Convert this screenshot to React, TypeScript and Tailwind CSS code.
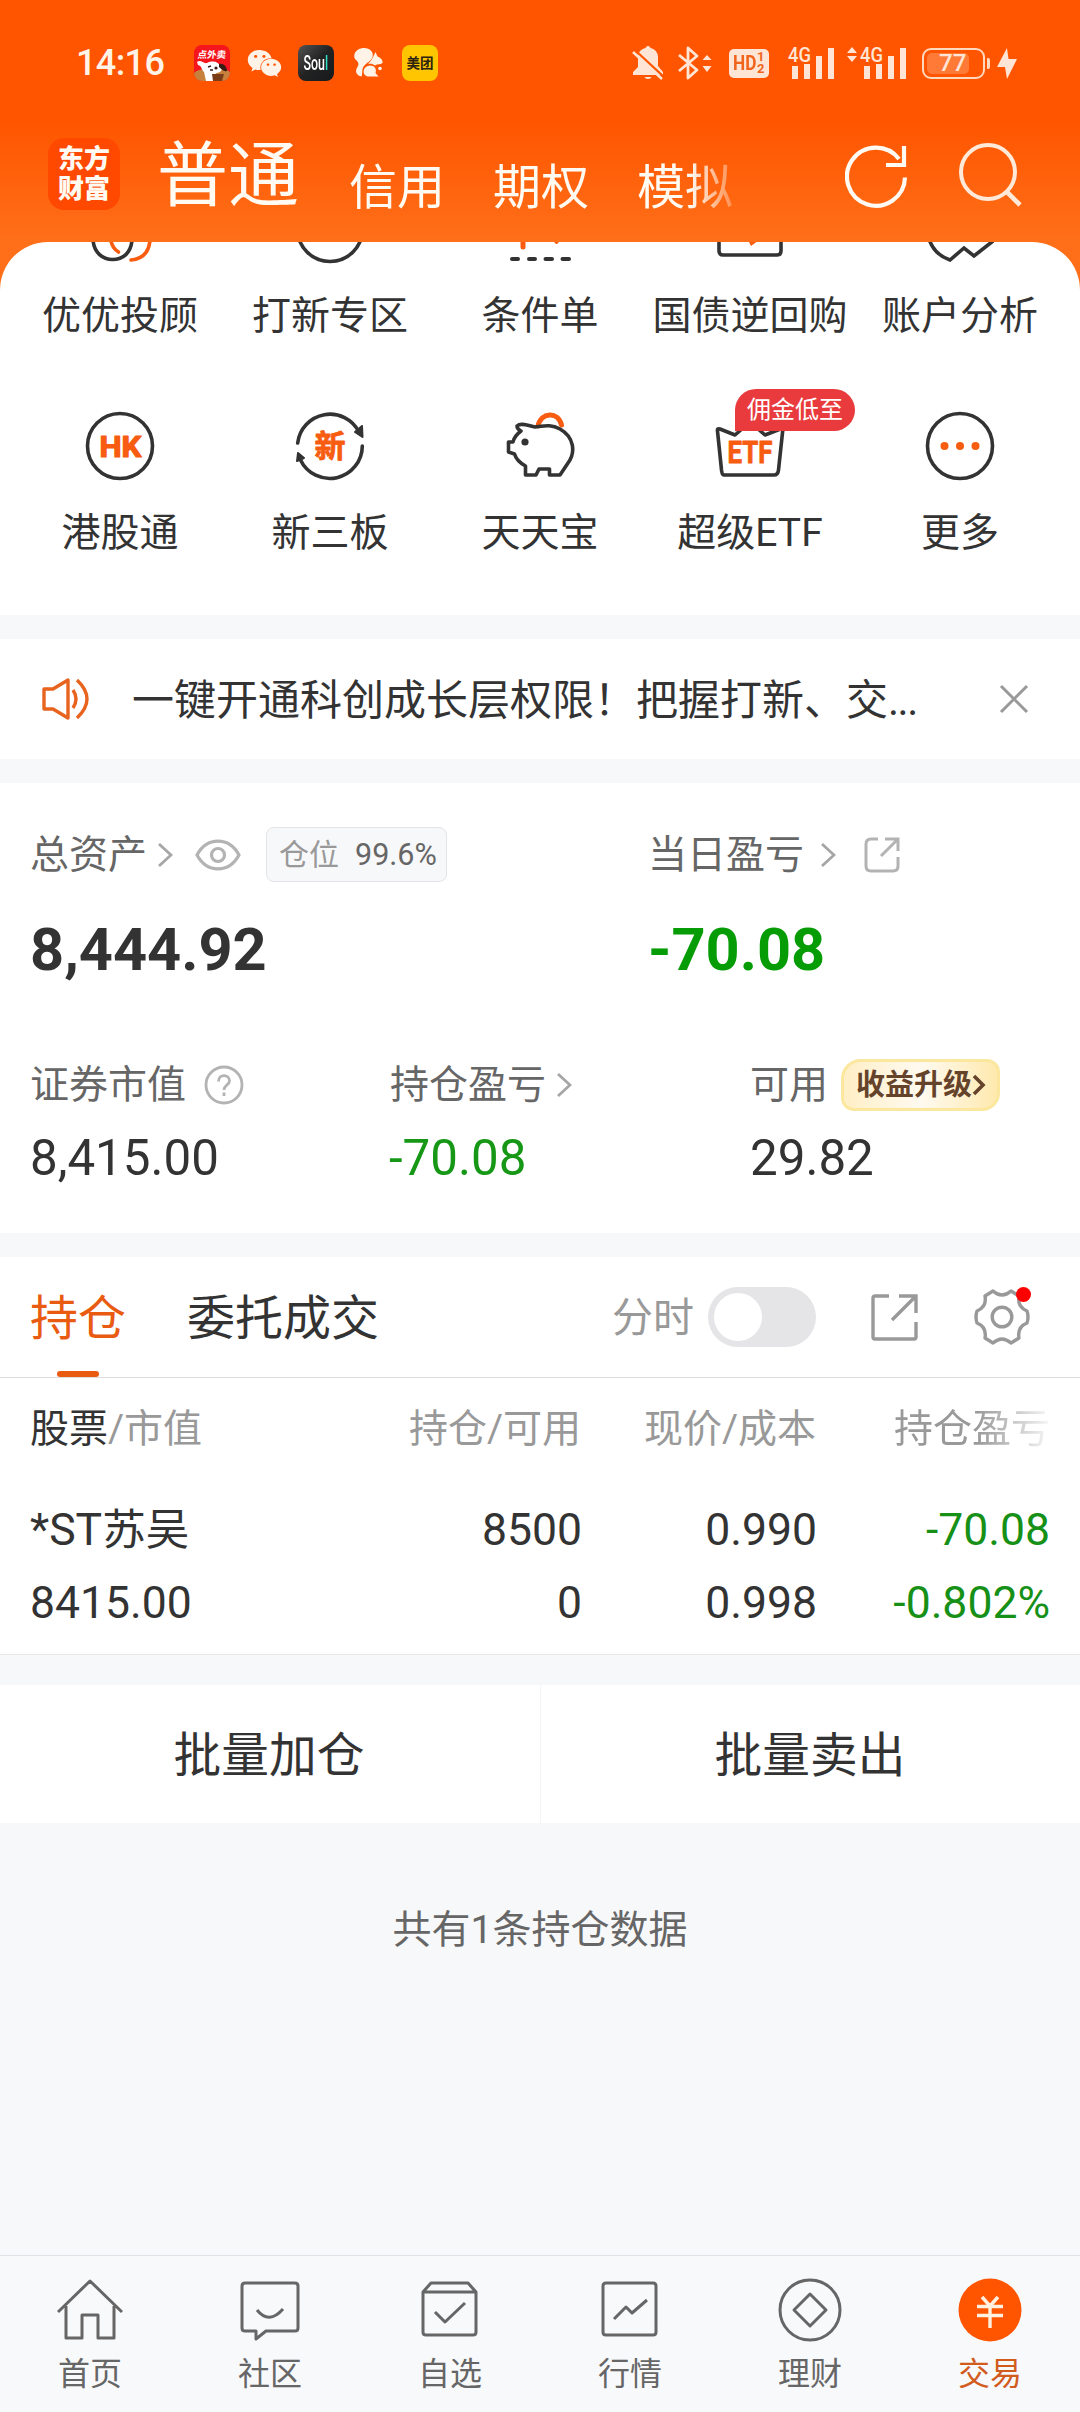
import React from "react";
import { FaWeixin } from "react-icons/fa";

const INK = "#333333";
const ORANGE = "#f75c10";

function StatusBar() {
  return (
    <div className="flex h-[126px] items-center pl-[76px] text-[#fff3e8]">
      <span className="w-[118px] text-[36px] leading-[40px] font-medium tracking-[-0.600px]">14:16</span>
      <svg width="36" height="36" viewBox="0 0 36 36">
        <defs>
          <clipPath id="dog"><rect width="36" height="36" rx="8" /></clipPath>
        </defs>
        <g clipPath="url(#dog)">
          <rect width="36" height="36" fill="#f5151c" />
          <path d="M0 28C6 22 30 22 36 27V36H0Z" fill="#c8813c" />
          <path d="M3 17C7 14 9 19 13 18C19 15 25 17 27 22C30 25 25 29 20 28L10 27C7 24 8 21 4 20Z" fill="#fff" />
          <path d="M25 19C29 18 33 21 33 26C29 27 28 24 25 22Z" fill="#3a1c14" />
          <path d="M10 27H22L21 36H12Z" fill="#fff" />
          <path d="M18 29H30L28 36H19Z" fill="#7a3d18" />
          <path d="M14 22L17 21M16 25L19 25" stroke="#3a1c14" strokeWidth="1.4" />
          <circle cx="22" cy="23" r="1.6" fill="#3a1c14" />
        </g>
        <text x="18" y="13.500" textAnchor="middle" fontSize="9.500" fontWeight="700" fill="#fff" transform="skewX(-6) translate(1 0)">点外卖</text>
      </svg>
      <FaWeixin className="ml-[17px] text-[35px]" />
      <div className="ml-[16px] flex h-[36px] w-[36px] items-center justify-center rounded-[8px] bg-linear-to-br from-[#555] via-[#222] to-[#161a1c] text-[20px] font-medium text-white">
        <span className="-mx-2 inline-block scale-x-[0.62] whitespace-nowrap">Sou<span className="text-[#30dfc5]">l</span></span>
      </div>
      <svg className="ml-[20px]" width="29" height="30" viewBox="0 0 29 30" fill="currentColor">
        <path d="M10 0C16 0 20 4 18.500 9C17 14 10 15.500 8.500 21C8 24 8.500 26 7.500 28.500C2.500 28 0.500 23 3.500 19C5.500 16 4 13.500 1.500 11.500C0 10 0 8 0.500 6C2 2 6 0 10 0Z" />
        <path d="M14 16C17 13.500 19 9.500 21.500 4L23.500 8.500C27 10 29 12 28.500 15C26 17 23.500 15.500 21 17.500C19 16 17 15.500 14 16Z" />
        <path d="M16 17.500C20.500 17.500 23 21 21.500 25L24.500 28.500H13.500C7.500 27 8.500 18 16 17.500Z" />
        <circle cx="26" cy="20.500" r="1.800" />
      </svg>
      <div className="ml-[19px] flex h-[36px] w-[36px] items-center justify-center rounded-[8px] bg-[#ffc500] text-[13.500px] font-bold text-[#2b2210]">美团</div>

      <div className="ml-auto flex items-center pr-[63px] text-[#ffe5d5]">
        <svg width="32" height="34" viewBox="0 0 32 34" fill="currentColor">
          <path d="M16 0C17.500 0 18 1 18.500 2C23 3 26 6.500 26 11V20L31 26V29H1V26L6 21V11C6 6.500 9 3 13.500 2C14 1 14.500 0 16 0Z" />
          <path d="M12.500 31H19.500C19 33.500 13 33.500 12.500 31Z" />
          <path d="M1 6L30 33" stroke="currentColor" strokeWidth="2.600" />
          <path d="M4 5L32 31" stroke="#ff5500" strokeWidth="2.200" />
        </svg>
        <svg className="ml-[14px]" width="35" height="34" viewBox="0 0 35 34" fill="none" stroke="currentColor" strokeWidth="2.800" strokeLinejoin="round">
          <path d="M1 9L19 24L10 32V2L19 10L1 25" />
          <path d="M29 9L33.500 14H24.500ZM29 26L33.500 20H24.500Z" fill="currentColor" stroke="none" />
        </svg>
        <div className="ml-[16px] flex h-[29px] w-[40px] items-center rounded-[5px] bg-[#ffe5d5] pl-[4px] text-[#f0641c]">
          <span className="inline-block w-[24px] origin-left scale-x-[0.86] text-[20px] leading-[29px] font-bold">HD</span>
          <span className="text-[13px] leading-[12px] font-bold">1<br />2</span>
        </div>
        <svg className="ml-[19px] overflow-visible" width="47" height="34" viewBox="0 0 47 34" fill="currentColor">
          <text x="0" y="16" fontSize="21" fontWeight="500" textLength="23" lengthAdjust="spacingAndGlyphs">4G</text>
          <path d="M4 20h6v13h-6zM16 18h6v15h-6zM28 10h6v23h-6zM40 2h6v31h-6z" />
        </svg>
        <svg className="ml-[12px] overflow-visible" width="60" height="34" viewBox="0 0 60 34" fill="currentColor">
          <path d="M5 1L10 7H0ZM5 16L10 10H0Z" />
          <text x="13" y="16" fontSize="21" fontWeight="500" textLength="23" lengthAdjust="spacingAndGlyphs">4G</text>
          <path d="M17 20h6v13h-6zM29 18h6v15h-6zM41 10h6v23h-6zM53 2h6v31h-6z" />
        </svg>
        <div className="ml-[15px] flex h-[31px] w-[63px] items-center rounded-[9px] border-[2.500px] border-[#ffd9bd] p-[3px]">
          <div className="flex h-full w-[42px] items-center rounded-[5px] bg-[#ff7a36] pl-[12px] text-[24px] font-medium">77</div>
        </div>
        <div className="ml-[2px] h-[11px] w-[3px] rounded-r-[2px] bg-[#ffd9bd]" />
        <svg className="ml-[7px]" width="20" height="31" viewBox="0 0 20 31" fill="currentColor">
          <path d="M10 0L0 19H8L10 31L20 11H11.500Z" />
        </svg>
      </div>
    </div>
  );
}

function Header() {
  return (
    <div className="flex h-[116px] text-[#fffaf2]">
      <div className="mt-[12px] ml-[48px] flex h-[72px] w-[72px] shrink-0 flex-col items-center justify-center rounded-[16px] bg-[#ff4800] text-[26px] leading-[30px] font-black">
        <span>东方</span>
        <span>财富</span>
      </div>
      <div className="flex w-[640px] shrink-0 gap-[48px] pl-[37px] whitespace-nowrap [mask-image:linear-gradient(to_right,#000_570px,transparent_630px)]">
        <span className="w-[144px] shrink-0 text-[71px] leading-[100px]">普通</span>
        <span className="mt-[31px] text-[48px] leading-[62px]">信用</span>
        <span className="mt-[31px] text-[48px] leading-[62px]">期权</span>
        <span className="mt-[31px] text-[48px] leading-[62px]">模拟</span>
      </div>
      <svg className="mt-[18px] ml-[85px] shrink-0" width="64" height="64" viewBox="0 0 64 64" fill="none" stroke="currentColor" strokeWidth="4.200">
        <path d="M60 33.500A29 29 0 1 1 54 15" />
        <path d="M59 2V21H41" />
      </svg>
      <svg className="mt-[16px] ml-[49px] shrink-0 text-[#ffead9]" width="64" height="66" viewBox="0 0 64 66" fill="none" stroke="currentColor" strokeWidth="4">
        <circle cx="30" cy="30" r="27" />
        <path d="M48 49L62 63" strokeWidth="4.600" />
      </svg>
    </div>
  );
}

function Tile({ label, children }: { label: string; children: React.ReactNode }) {
  return (
    <div className="relative flex w-[210px] flex-col items-center text-[#333]">
      {children}
      <span className="mt-[2px] text-[39px] leading-[48px] whitespace-nowrap">{label}</span>
    </div>
  );
}

const line = { fill: "none", stroke: INK, strokeWidth: 3.6, strokeLinejoin: "round" as const, strokeLinecap: "round" as const };

function Shortcuts() {
  return (
    <div className="h-[373px] overflow-hidden rounded-t-[48px] bg-white px-[15px]">
      <div className="flex h-[168px]">
        <Tile label="优优投顾">
          <svg className="mb-[24px]" width="72" height="24" viewBox="0 0 72 24" {...line}>
            <path d="M9 -2C10 11 19 17.500 28.500 17.500C39 17.500 47 11 48 -2" />
            <path d="M26.500 -3Q28 6 34.500 10M66 -2C65 11 58 17 47 18" stroke={ORANGE} />
          </svg>
        </Tile>
        <Tile label="打新专区">
          <svg className="mb-[24px]" width="72" height="24" viewBox="0 0 72 24" {...line}>
            <circle cx="36" cy="-13" r="32.500" />
          </svg>
        </Tile>
        <Tile label="条件单">
          <svg className="mb-[24px]" width="72" height="24" viewBox="0 0 72 24" {...line}>
            <path d="M19 -2V5" stroke={ORANGE} strokeWidth="5" />
            <path d="M50 -3L52.500 0L55 -3" stroke={ORANGE} />
            <path d="M8 17H14M25 17H31M41.500 17H48M58.500 17H65" strokeWidth="4" />
          </svg>
        </Tile>
        <Tile label="国债逆回购">
          <svg className="mb-[24px]" width="72" height="24" viewBox="0 0 72 24" {...line}>
            <path d="M5 -4V9Q5 13 9 13H63Q67 13 67 9V-4" />
            <path d="M34 -2H45L37 4Z" fill={ORANGE} stroke="none" />
          </svg>
        </Tile>
        <Tile label="账户分析">
          <svg className="mb-[24px]" width="72" height="24" viewBox="0 0 72 24" {...line}>
            <path d="M5 -3C9 9 17 15 26 18L40 6L50 14L69 -1" strokeLinecap="butt" strokeLinejoin="miter" />
          </svg>
        </Tile>
      </div>
      <div className="flex">
        <Tile label="港股通">
          <svg className="mb-[25px]" width="72" height="72" viewBox="0 0 72 72" {...line}>
            <circle cx="36" cy="36" r="32.500" />
            <text x="36.500" y="46.500" textAnchor="middle" textLength="42" lengthAdjust="spacingAndGlyphs" fontSize="29" fontWeight="700" fill={ORANGE} stroke={ORANGE} strokeWidth="1.200">HK</text>
          </svg>
        </Tile>
        <Tile label="新三板">
          <svg className="mb-[25px]" width="72" height="72" viewBox="0 0 72 72" {...line}>
            <path d="M3.700 33A32.500 32.500 0 0 1 65 22M68.300 36A32.500 32.500 0 0 1 6.500 50" />
            <path d="M68 16L68.500 27L61 22ZM4 43L3 51L10 48Z" fill={INK} strokeWidth="2" />
            <text x="36" y="47" textAnchor="middle" fontSize="31" fontWeight="700" fill={ORANGE} stroke={ORANGE} strokeWidth="0.800">新</text>
          </svg>
        </Tile>
        <Tile label="天天宝">
          <svg className="mb-[25px]" width="72" height="72" viewBox="0 0 72 72" {...line}>
            <path d="M34 16C37 2 54 1 57.500 15" stroke={ORANGE} strokeWidth="5" />
            <path d="M13 16C17 12 25 16 31 17C40 16 47 14 56 19C70 27 72 42 64 53L56 65H45.500V59H35L32 65H21.500V56C16 53 12 49 10.500 44L4.500 42V32H9C10 27 13 24 17 21Q13 19 13 16Z" />
            <circle cx="21" cy="32" r="3.600" fill={INK} stroke="none" />
          </svg>
        </Tile>
        <Tile label="超级ETF">
          <svg className="mb-[25px]" width="72" height="72" viewBox="0 0 72 72" {...line}>
            <path d="M9 64.500Q8 64 7.500 60L3.500 21Q3 18 6 19L21 25L36 12L51 25L69 18L64.500 60Q64 65 60 65H12Q9 65 9 64.500Z" />
            <text x="36" y="52.500" textAnchor="middle" textLength="45" lengthAdjust="spacingAndGlyphs" fontSize="31" fontWeight="700" fill={ORANGE} stroke={ORANGE} strokeWidth="0.800">ETF</text>
          </svg>
          <div className="absolute top-[-21px] left-[90px] flex h-[42px] w-[120px] items-center justify-center rounded-[21px] rounded-bl-none bg-[#e93b3d] text-[24px] leading-[42px] text-white">佣金低至</div>
        </Tile>
        <Tile label="更多">
          <svg className="mb-[25px]" width="72" height="72" viewBox="0 0 72 72" {...line}>
            <circle cx="36" cy="36" r="32.500" />
            <g fill={ORANGE} stroke="none">
              <circle cx="20.500" cy="36" r="4" />
              <circle cx="36" cy="36" r="4" />
              <circle cx="51.500" cy="36" r="4" />
            </g>
          </svg>
        </Tile>
      </div>
    </div>
  );
}

function Notice() {
  return (
    <div className="my-[24px] flex h-[120px] items-center bg-white pl-[41px] text-[#333]">
      <svg width="50" height="44" viewBox="0 0 50 44" fill="none" stroke="#e8631e" strokeWidth="3.400" strokeLinejoin="round">
        <path d="M3 12H12L27 3V41L12 32H3Z" />
        <path d="M32 13Q38 22 32 31M36 3Q56 22 36 41" />
      </svg>
      <span className="mt-[4px] ml-[41px] w-[826px] text-[42px] leading-[60px] whitespace-nowrap">一键开通科创成长层权限！把握打新、交<span className="tracking-[-1.500px]">...</span></span>
      <svg className="ml-[41px]" width="30" height="30" viewBox="0 0 30 30" stroke="#999" strokeWidth="3">
        <path d="M2 2L28 28M28 2L2 28" />
      </svg>
    </div>
  );
}

function Chevron({ className }: { className: string }) {
  return (
    <svg className={className} width="16" height="26" viewBox="0 0 16 26" fill="none" stroke="#a6a6a6" strokeWidth="2.800">
      <path d="M2 2L14 13L2 24" />
    </svg>
  );
}

function Assets() {
  return (
    <div className="h-[450px] bg-white pl-[30px] text-[#666]">
      <div className="flex h-[143px] items-center text-[39px]">
        <div className="flex w-[618px] items-center">
          <span className="leading-[54px]">总资产</span>
          <Chevron className="ml-[10px]" />
          <svg className="ml-[22px]" width="46" height="32" viewBox="0 0 46 32" fill="none" stroke="#b3b3b3" strokeWidth="3.200">
            <path d="M2 16C12 -2.500 34 -2.500 44 16C34 34.500 12 34.500 2 16Z" />
            <circle cx="23" cy="16" r="6.500" />
          </svg>
          <div className="ml-[25px] flex h-[55px] w-[181px] items-center rounded-[8px] border border-[#e3e4e8] bg-[#f7f8fa] pl-[12px] text-[30px] leading-[50px]">
            <span className="text-[#999]">仓位</span>
            <span className="ml-[16px] text-[30.500px]">99.6%</span>
          </div>
        </div>
        <span className="leading-[54px]">当日盈亏</span>
        <Chevron className="ml-[16px]" />
        <svg className="ml-[28px]" width="36" height="36" viewBox="0 0 36 36" fill="none" stroke="#b3b3b3" strokeWidth="3">
          <path d="M14 2H7Q2 2 2 7V29Q2 34 7 34H29Q34 34 34 29V20M21 2H34V14M34 2L17 19" />
        </svg>
      </div>
      <div className="mt-[1px] flex h-[46px] items-center text-[59.500px] leading-[46px] font-bold">
        <span className="w-[618px] text-[#333]">8,444.92</span>
        <span className="text-[#069c06]">-70.08</span>
      </div>
      <div className="mt-[85px] flex h-[54px] items-center text-[39px] leading-[54px]">
        <div className="flex w-[360px] items-center">
          <span>证券市值</span>
          <svg className="ml-[18px]" width="40" height="40" viewBox="0 0 40 40" fill="none" stroke="#b3b3b3" strokeWidth="2.800">
            <circle cx="20" cy="20" r="18" />
            <path d="M14.500 16.500C14.500 8.500 25.500 9 25.500 16C25.500 20 20 20 20 25" />
            <path d="M20 27.500V31" />
          </svg>
        </div>
        <div className="flex w-[360px] items-center">
          <span>持仓盈亏</span>
          <Chevron className="ml-[10px]" />
        </div>
        <span>可用</span>
        <div className="ml-[13px] flex h-[52px] w-[159px] items-center rounded-[13px] rounded-tl-[20px] rounded-br-[18px] border-[3px] border-[#fce79f] bg-linear-to-r from-[#ffefc6] via-[#fffaf0] to-[#ffe9ae] pl-[12px] text-[#65432b]">
          <span className="text-[29px] leading-[40px] font-bold">收益升级</span>
          <svg width="14" height="22" viewBox="0 0 14 22" fill="none" stroke="currentColor" strokeWidth="3.600">
            <path d="M2 2L11 11L2 20" />
          </svg>
        </div>
      </div>
      <div className="mt-[18px] flex text-[49.300px] leading-[56px] text-[#333]">
        <span className="w-[359px]">8,415.00</span>
        <span className="w-[361px] text-[#169716]">-70.08</span>
        <span>29.82</span>
      </div>
    </div>
  );
}

function Positions() {
  return (
    <div className="mt-[24px] h-[398px] border-b border-[#e6e8ea] bg-white">
      <div className="flex h-[121px] items-center border-b border-[#dedede] pl-[30px] text-[48px]">
        <div className="relative flex h-full items-center pt-[3px] text-[#ea5b12]">
          持仓
          <div className="absolute bottom-0 left-[27px] h-[6px] w-[42px] rounded-full bg-[#ea5b12]" />
        </div>
        <span className="mt-[4px] ml-[61px] text-[#333]">委托成交</span>
        <span className="mt-[3px] ml-[233px] w-[96px] text-[41px] text-[#999]">分时</span>
        <div className="flex h-[60px] w-[108px] items-center rounded-full bg-[#e5e5e7] pl-[6px]">
          <div className="h-[48px] w-[48px] rounded-full bg-white" />
        </div>
        <svg className="ml-[55px]" width="47" height="47" viewBox="0 0 47 47" fill="none" stroke="#999" strokeWidth="3.400">
          <path d="M18 2H4Q2 2 2 4V43Q2 45 4 45H43Q45 45 45 43V28M28 2H45V19M45 2L21 26" />
        </svg>
        <div className="relative ml-[56px]">
          <svg width="56" height="56" viewBox="0 0 56 56" fill="none" stroke="#999" strokeWidth="3.400" strokeLinejoin="round">
            <path d="M19 2Q28 10 37 2L45 7Q43 18 53 22Q55 28 53 34Q43 38 45 49L37 54Q28 46 19 54L11 49Q13 38 3 34Q1 28 3 22Q13 18 11 7Z" />
            <circle cx="28" cy="28" r="9.800" />
          </svg>
          <div className="absolute -top-[2px] left-[42px] h-[15px] w-[15px] rounded-full bg-[#fe0000]" />
        </div>
      </div>
      <div className="grid h-[102px] grid-cols-[302px_250px_235px_233px] items-center pl-[30px] text-right text-[39px] text-[#999]">
        <span className="text-left"><span className="text-[#333]">股票</span>/市值</span>
        <span className="pr-[1px]">持仓/可用</span>
        <span className="pr-[1px]">现价/成本</span>
        <span className="[mask-image:linear-gradient(to_right,#000_160px,transparent_240px)]">持仓盈亏</span>
      </div>
      <div className="mt-[14px] grid grid-cols-[302px_250px_235px_233px] pl-[30px] text-right text-[44.500px] leading-[72px] text-[#333]">
        <span className="text-left">*ST<span className="text-[43.500px]">苏吴</span></span>
        <span>8500</span>
        <span>0.990</span>
        <span className="text-[#169016]">-70.08</span>
        <span className="text-left">8415.00</span>
        <span>0</span>
        <span>0.998</span>
        <span className="text-[#169016]">-0.802%</span>
      </div>
    </div>
  );
}

const NAV: { label: string; icon: React.ReactNode; active?: boolean }[] = [
  { label: "首页", icon: <path d="M1 34L33 3L65 34M9 28V60H25V37H41V60H57V28" /> },
  { label: "社区", icon: <path d="M8 5H58Q61 5 61 8V50Q61 53 58 53H29L19 61V53H8Q5 53 5 50V8Q5 5 8 5ZM20 32Q32 47 46 31" /> },
  { label: "自选", icon: <path d="M6 14L14 5H51L59 14V54Q59 57 56 57H9Q6 57 6 54ZM6 14H59M18 34L28 44L48 25" /> },
  { label: "行情", icon: <path d="M9 5H56Q59 5 59 8V54Q59 57 56 57H9Q6 57 6 54V8Q6 5 9 5ZM17 41L29 29L35 35L50 22" /> },
  { label: "理财", icon: <><circle cx="33" cy="32" r="30" /><path d="M33 16L49 32L33 48L17 32Z" /></> },
  {
    label: "交易",
    active: true,
    icon: <><circle cx="33" cy="32" r="31.500" fill="#ff5500" stroke="none" /><path d="M25 19L33 28L41 19M20 28.500H46M20 37.500H46M33 28V50" stroke="#fff0df" strokeWidth="3.400" /></>,
  },
];

function BottomNav() {
  return (
    <div className="flex h-[157px] border-t border-[#dfe3e6] bg-[#f8f9fb] pt-[22px]">
      {NAV.map((n) => (
        <div key={n.label} className="flex w-[180px] flex-col items-center">
          <svg width="66" height="66" viewBox="0 0 66 66" fill="none" stroke="#666" strokeWidth="3" strokeLinejoin="round">{n.icon}</svg>
          <span className={n.active ? "mt-[8px] text-[32px] leading-[44px] text-[#d15c1e]" : "mt-[8px] text-[32px] leading-[44px] text-[#666]"}>{n.label}</span>
        </div>
      ))}
    </div>
  );
}

export default function App() {
  return (
    <div className="flex h-[2412px] w-[1080px] flex-col overflow-hidden bg-[#f7f8fa] font-['Roboto','Noto_Sans_CJK_SC',sans-serif]">
      <div className="bg-[linear-gradient(#ff5500_0px,#ff5500_120px,#ff6f19_242px)]">
        <StatusBar />
        <Header />
        <div className="bg-[#ff6f19]">
          <Shortcuts />
        </div>
      </div>
      <Notice />
      <Assets />
      <Positions />
      <div className="mt-[30px] flex h-[138px] text-[47.700px] text-[#333]">
        <div className="flex flex-1 items-center justify-center border-r border-[#f4f5f6] bg-white pt-[6px] pr-[2px]">批量加仓</div>
        <div className="flex flex-1 items-center justify-center bg-white pt-[6px] pr-[1px]">批量卖出</div>
      </div>
      <div className="mt-[79px] text-center text-[39px] leading-[56px] text-[#666]">共有1条持仓数据</div>
      <div className="flex-1" />
      <BottomNav />
    </div>
  );
}
